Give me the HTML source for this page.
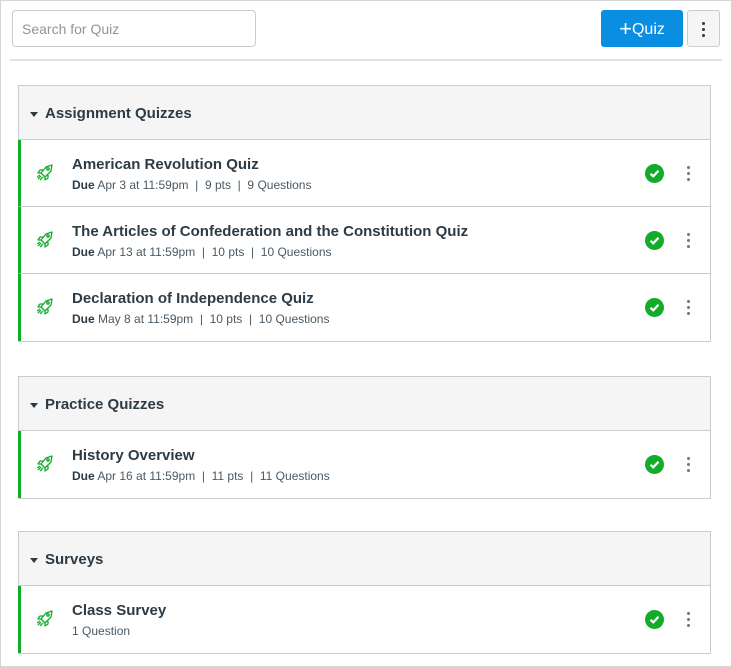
<!DOCTYPE html>
<html><head><meta charset="utf-8"><style>
*{box-sizing:border-box;margin:0;padding:0}
body{width:732px;height:667px;background:#fff;font-family:"Liberation Sans",sans-serif;color:#2d3b45;position:relative;overflow:hidden;box-shadow:inset 0 0 0 1px #d5d5d5}
.search{position:absolute;left:12px;top:10px;width:244px;height:37px;border:1px solid #c7cdd1;border-radius:4px;font-size:14px;color:#8b969e;padding:10px 9px}
.qbtn{position:absolute;left:601px;top:10px;width:82px;height:37px;background:#0a8ee2;border-radius:3px;color:#fff;font-size:16px;line-height:37px;text-align:center}
.kb{position:absolute;left:687px;top:10px;width:33px;height:37px;background:#f5f5f5;border:1px solid #c7cdd1;border-radius:3px}
.dots{position:absolute;width:3px}
.dots i{display:block;width:3px;height:3px;border-radius:50%;background:#2d3b45;margin-bottom:3px}
.hr{position:absolute;left:10px;top:59px;width:712px;height:2px;background:#e0e3e5}
.grp{position:absolute;left:18px;width:693px;border:1px solid #c7cdd1}
.hd{height:54px;background:#f5f5f5;border-bottom:1px solid #c7cdd1;font-size:15px;font-weight:bold;padding-left:26px;line-height:55px;position:relative}
.hd:before{content:"";position:absolute;left:11px;top:26px;border-left:4px solid transparent;border-right:4px solid transparent;border-top:5px solid #2d3b45}
.row{height:67px;border-left:3px solid #13ab2a;border-bottom:1px solid #c7cdd1;position:relative;margin-left:-1px}
.row:last-child{border-bottom:none}
.t{position:absolute;left:51px;top:16px;font-size:15px;font-weight:bold}
.m{position:absolute;left:51px;top:38px;font-size:12px;color:#4a5964}
.m b{color:#2d3b45}
.ic{position:absolute;left:16px;top:24px}
.ck{position:absolute;left:624px;top:24px;width:19px;height:19px;border-radius:50%;background:#13ab2a}
.row .dots{left:666px;top:26px}
.row .dots i{background:#6b7780}
</style></head><body>
<div class="search">Search for Quiz</div>
<div class="qbtn"><span style="font-size:22px;font-weight:300;vertical-align:-2px">+</span>Quiz</div>
<div class="kb"><div class="dots" style="left:14px;top:11px"><i></i><i></i><i></i></div></div>
<div class="hr"></div>

<svg width="0" height="0" style="position:absolute"><defs><g id="r" fill="none" stroke="#13ab2a" stroke-width="1.3" stroke-linejoin="round"><path d="M15 1 L9 3 L4 9 L8 13 L14 7 Z"/><path d="M4 9 L1 9 L3 6 L6 6"/><path d="M8 13 L8 16 L11 14 L11 11"/><circle cx="11" cy="5" r="1.2"/><path d="M4 12 L1 15 M6 13 L3 16 M3 11 L0 13"/></g></defs></svg>

<div class="grp" style="top:85px">
<div class="hd">Assignment Quizzes</div>
<div class="row"><svg class="ic" width="17" height="17"><use href="#r"/></svg><div class="t">American Revolution Quiz</div><div class="m"><b>Due</b> Apr 3 at 11:59pm &nbsp;| &nbsp;9 pts &nbsp;| &nbsp;9 Questions</div><div class="ck"><svg width="19" height="19"><path d="M5.5 9.8 L8.3 12.3 L13.5 6.8" fill="none" stroke="#fff" stroke-width="2.2"/></svg></div><div class="dots"><i></i><i></i><i></i></div></div>
<div class="row"><svg class="ic" width="17" height="17"><use href="#r"/></svg><div class="t">The Articles of Confederation and the Constitution Quiz</div><div class="m"><b>Due</b> Apr 13 at 11:59pm &nbsp;| &nbsp;10 pts &nbsp;| &nbsp;10 Questions</div><div class="ck"><svg width="19" height="19"><path d="M5.5 9.8 L8.3 12.3 L13.5 6.8" fill="none" stroke="#fff" stroke-width="2.2"/></svg></div><div class="dots"><i></i><i></i><i></i></div></div>
<div class="row"><svg class="ic" width="17" height="17"><use href="#r"/></svg><div class="t">Declaration of Independence Quiz</div><div class="m"><b>Due</b> May 8 at 11:59pm &nbsp;| &nbsp;10 pts &nbsp;| &nbsp;10 Questions</div><div class="ck"><svg width="19" height="19"><path d="M5.5 9.8 L8.3 12.3 L13.5 6.8" fill="none" stroke="#fff" stroke-width="2.2"/></svg></div><div class="dots"><i></i><i></i><i></i></div></div>
</div>

<div class="grp" style="top:376px">
<div class="hd">Practice Quizzes</div>
<div class="row"><svg class="ic" width="17" height="17"><use href="#r"/></svg><div class="t">History Overview</div><div class="m"><b>Due</b> Apr 16 at 11:59pm &nbsp;| &nbsp;11 pts &nbsp;| &nbsp;11 Questions</div><div class="ck"><svg width="19" height="19"><path d="M5.5 9.8 L8.3 12.3 L13.5 6.8" fill="none" stroke="#fff" stroke-width="2.2"/></svg></div><div class="dots"><i></i><i></i><i></i></div></div>
</div>

<div class="grp" style="top:531px">
<div class="hd">Surveys</div>
<div class="row"><svg class="ic" width="17" height="17"><use href="#r"/></svg><div class="t">Class Survey</div><div class="m">1 Question</div><div class="ck"><svg width="19" height="19"><path d="M5.5 9.8 L8.3 12.3 L13.5 6.8" fill="none" stroke="#fff" stroke-width="2.2"/></svg></div><div class="dots"><i></i><i></i><i></i></div></div>
</div>
</body></html>
